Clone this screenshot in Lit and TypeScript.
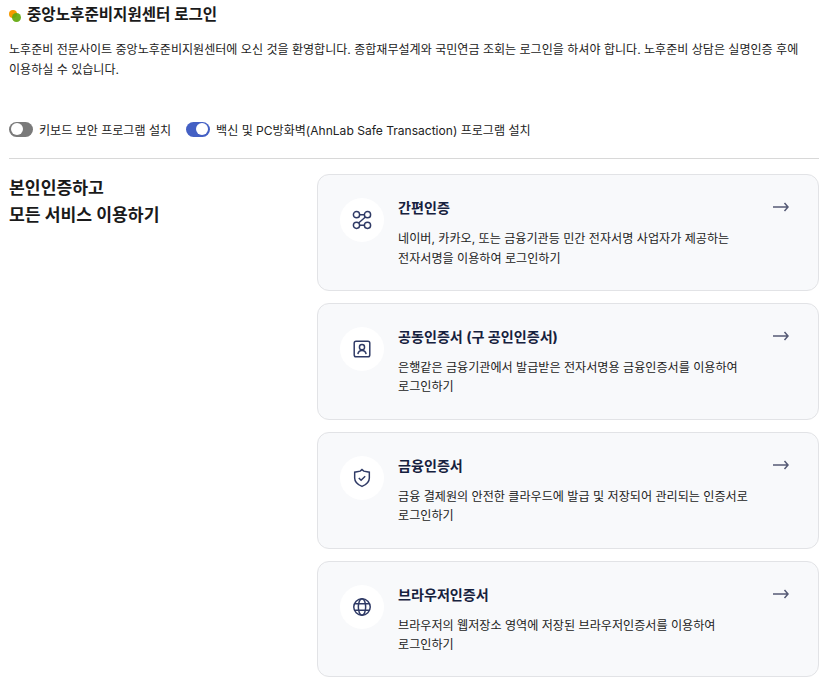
import { LitElement, html, css, svg } from 'lit';
import { customElement } from 'lit/decorators.js';

const icons = {
  simple: svg`<circle cx="6" cy="6.200" r="3.400"/><circle cx="18" cy="6.200" r="3.400"/><circle cx="6" cy="17.800" r="3.400"/><circle cx="18" cy="17.800" r="3.400"/><path d="M9.400 6.200h5.200M9.400 17.800h5.200M15.700 8.700 8.300 15.300"/>`,
  joint: svg`<rect x="3.500" y="3.500" width="17" height="17" rx="2"/><circle cx="12" cy="10" r="2.800"/><path d="M7.500 17.500c.5-2.600 2.300-3.800 4.500-3.800s4 1.200 4.500 3.800"/>`,
  finance: svg`<path d="M12 2.800l2 1.700 6 1.200v6.300c0 4.200-3.200 7.200-8 9.200-4.800-2-8-5-8-9.200V5.700l6-1.200z"/><path d="M8.500 12l2.500 2.500 4.500-4.500"/>`,
  browser: svg`<circle cx="12" cy="12" r="9"/><ellipse cx="12" cy="12" rx="4" ry="9"/><path d="M3.800 8.500h16.400M3.800 15.500h16.400"/>`,
};

const methods = [
  { icon: icons.simple, title: '간편인증', lines: ['네이버, 카카오, 또는 금융기관등 민간 전자서명 사업자가 제공하는', '전자서명을 이용하여 로그인하기'] },
  { icon: icons.joint, title: '공동인증서 (구 공인인증서)', lines: ['은행같은 금융기관에서 발급받은 전자서명용 금융인증서를 이용하여', '로그인하기'] },
  { icon: icons.finance, title: '금융인증서', lines: ['금융 결제원의 안전한 클라우드에 발급 및 저장되어 관리되는 인증서로', '로그인하기'] },
  { icon: icons.browser, title: '브라우저인증서', lines: ['브라우저의 웹저장소 영역에 저장된 브라우저인증서를 이용하여', '로그인하기'] },
];

@customElement('app-root')
export class AppRoot extends LitElement {
  static styles = css`
    :host {
      display: block;
      box-sizing: border-box;
      width: 829px;
      height: 685px;
      overflow: hidden;
      padding: 5px 10px 0 9px;
      background: #fff;
      color: #1a1a1a;
      font-family: Inter, "Noto Sans CJK KR", sans-serif;
    }
    .title {
      display: flex;
      align-items: center;
      gap: 6px;
      height: 20px;
      font-size: 15.6px;
      font-weight: 700;
      line-height: 20px;
    }
    .dot {
      position: relative;
      width: 12px;
      height: 13px;
      flex: none;
    }
    .dot i {
      position: absolute;
      border-radius: 50%;
    }
    .dot .a {
      left: 0;
      top: 1px;
      width: 8px;
      height: 8px;
      background: #f59a00;
    }
    .dot .b {
      left: 3px;
      top: 4px;
      width: 9px;
      height: 9px;
      background: #62a80c;
      opacity: 0.92;
    }
    .desc {
      margin: 15px 0 0;
      font-size: 12.06px;
      line-height: 20px;
      color: #222;
    }
    .toggles {
      display: flex;
      gap: 15px;
      margin-top: 40px;
      height: 18px;
      align-items: center;
      font-size: 12.06px;
      color: #222;
    }
    .toggle {
      display: flex;
      align-items: center;
      gap: 6px;
    }
    .switch {
      display: flex;
      align-items: center;
      width: 24px;
      height: 15px;
      padding: 1.500px 2px;
      box-sizing: border-box;
      border-radius: 8px;
      background: #7a7a7a;
    }
    .switch.on {
      background: #4460c4;
      justify-content: flex-end;
    }
    .switch span {
      width: 12px;
      height: 12px;
      border-radius: 50%;
      background: #fff;
    }
    hr {
      margin: 20px 0 15.200px;
      border: 0;
      border-top: 1px solid #d8d8d8;
    }
    .body {
      display: grid;
      grid-template-columns: 308px 502px;
    }
    h2 {
      margin: 0;
      font-size: 17.200px;
      font-weight: 700;
      line-height: 27px;
      color: #1a1a1a;
    }
    .cards {
      display: flex;
      flex-direction: column;
      gap: 12px;
    }
    .card {
      display: flex;
      box-sizing: border-box;
      height: 116.800px;
      padding: 23px 22px;
      gap: 14px;
      border: 1px solid #e2e3e6;
      border-radius: 12px;
      background: #f8f9fb;
    }
    .circle {
      display: flex;
      flex: none;
      align-items: center;
      justify-content: center;
      width: 44px;
      height: 44px;
      border-radius: 50%;
      background: #fff;
    }
    .circle svg {
      width: 22px;
      height: 22px;
      fill: none;
      stroke: #2f3a66;
      stroke-width: 1.600;
    }
    .text {
      flex: 1;
    }
    .text h3 {
      margin: 0 0 11px;
      font-size: 14.100px;
      font-weight: 700;
      line-height: 20px;
      color: #16213e;
    }
    .text p {
      margin: 0;
      font-size: 12.100px;
      line-height: 19.500px;
      color: #222;
    }
    .arrow {
      flex: none;
      width: 18px;
      height: 18px;
      margin-right: 6px;
      fill: none;
      stroke: #555a75;
      stroke-width: 1.500;
    }
  `;

  render() {
    return html`
      <div class="title">
        <span class="dot"><i class="a"></i><i class="b"></i></span>
        중앙노후준비지원센터 로그인
      </div>
      <p class="desc">
        노후준비 전문사이트 중앙노후준비지원센터에 오신 것을 환영합니다. 종합재무설계와 국민연금 조회는 로그인을 하셔야 합니다. 노후준비 상담은 실명인증 후에<br />
        이용하실 수 있습니다.
      </p>
      <div class="toggles">
        <div class="toggle"><span class="switch"><span></span></span>키보드 보안 프로그램 설치</div>
        <div class="toggle"><span class="switch on"><span></span></span>백신 및 PC방화벽(AhnLab Safe Transaction) 프로그램 설치</div>
      </div>
      <hr />
      <div class="body">
        <h2>본인인증하고<br />모든 서비스 이용하기</h2>
        <div class="cards">
          ${methods.map(
            (m) => html`
              <div class="card">
                <div class="circle"><svg viewBox="0 0 24 24">${m.icon}</svg></div>
                <div class="text">
                  <h3>${m.title}</h3>
                  <p>${m.lines[0]}<br />${m.lines[1]}</p>
                </div>
                <svg class="arrow" viewBox="0 0 18 18"><path d="M1 9h15M12.500 5 16 9l-3.500 4"/></svg>
              </div>
            `
          )}
        </div>
      </div>
    `;
  }
}
